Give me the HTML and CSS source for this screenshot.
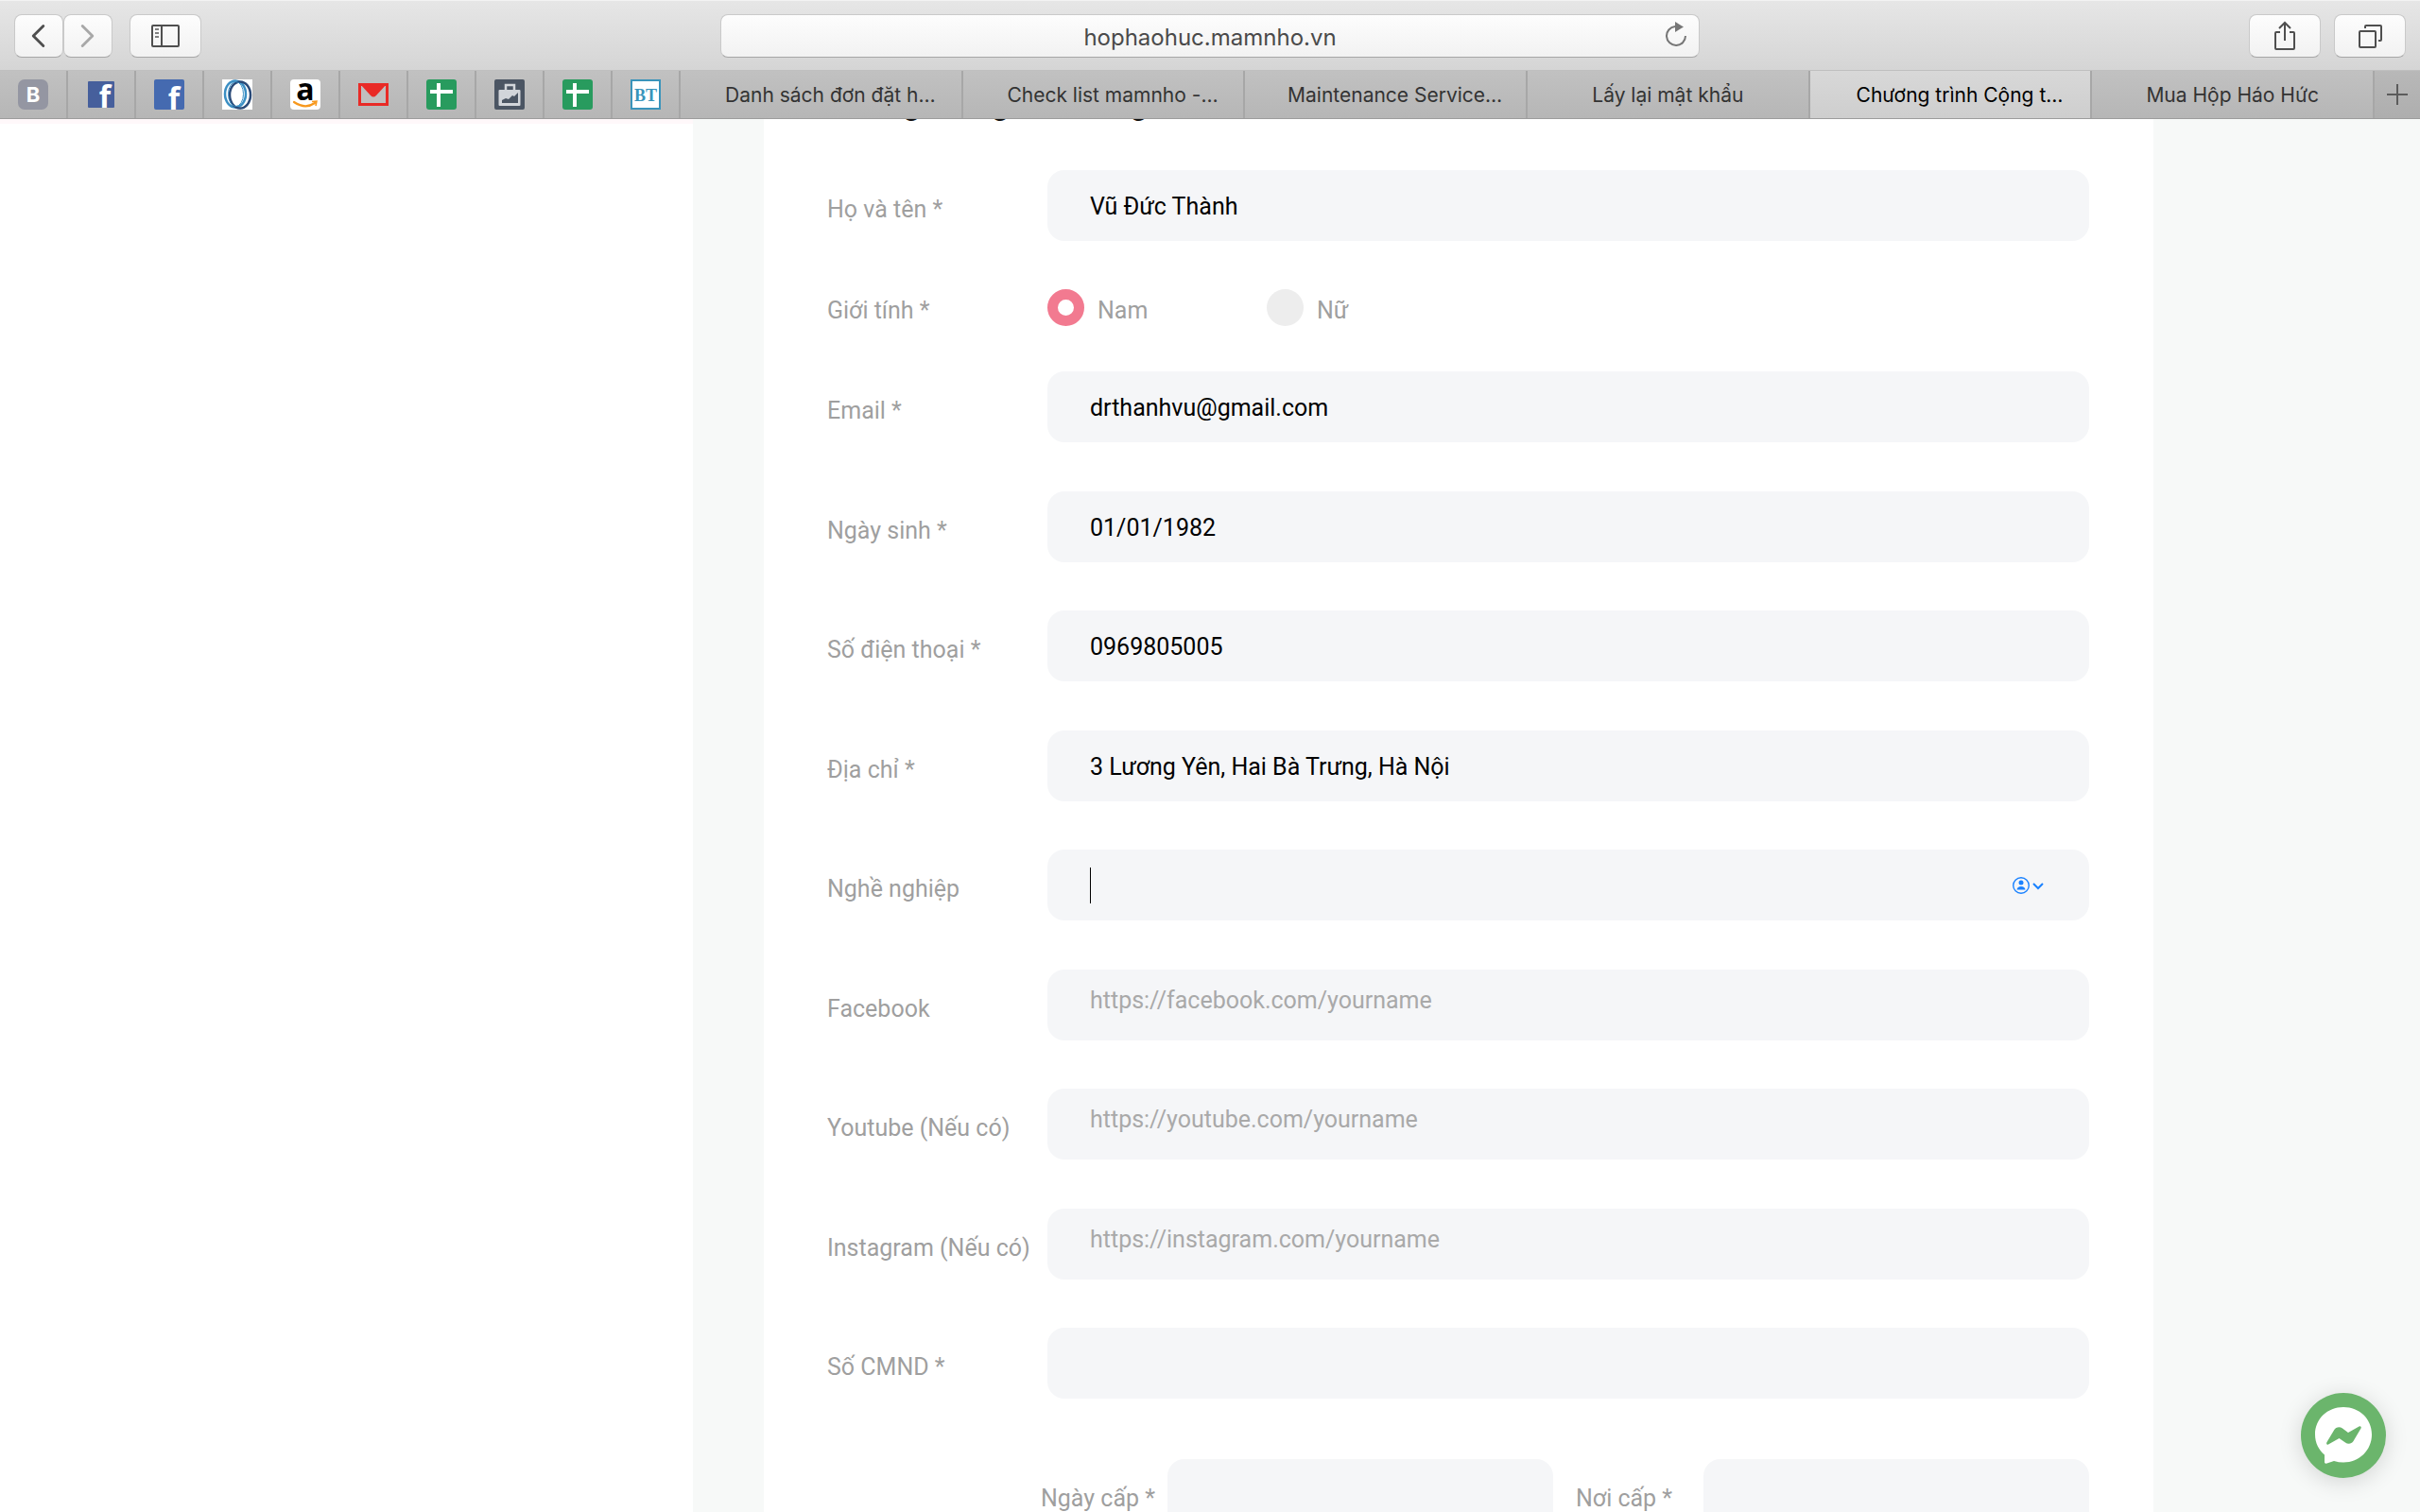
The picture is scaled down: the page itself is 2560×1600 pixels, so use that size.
FILE: index.html
```html
<!DOCTYPE html>
<html lang="vi">
<head>
<meta charset="utf-8">
<title>Chương trình Cộng tác viên</title>
<link rel="stylesheet" href="styles.css">
</head>
<body>
<header class="browser">
  <div class="toolbar">
    <div class="group history">
      <button class="tool narrow" aria-label="Back"><svg width="52" height="46" viewBox="0 0 52 46" fill="none" stroke="#4f4f4f" stroke-width="3" stroke-linecap="round" stroke-linejoin="round"><path d="M31 12 20 23 31 34"/></svg></button>
      <button class="tool narrow" aria-label="Forward"><svg width="52" height="46" viewBox="0 0 52 46" fill="none" stroke="#a8a8a8" stroke-width="3" stroke-linecap="round" stroke-linejoin="round"><path d="M20 12 31 23 20 34"/></svg></button>
    </div>
    <button class="tool" aria-label="Sidebar"><svg width="32" height="26" viewBox="0 0 32 26" fill="none" stroke="#4f4f4f" stroke-width="2"><rect x="2" y="2" width="28" height="22" rx="1"/><path d="M12 2v22"/><path d="M5 6h4M5 10h4M5 14h4" stroke="#808080"/></svg></button>
    <div class="address">
      <input class="url" type="text" value="hophaohuc.mamnho.vn" aria-label="Address">
      <button class="reload" aria-label="Reload"><svg width="26" height="30" viewBox="0 0 26 30"><path d="M23 16a10 10 0 1 1-11-10" fill="none" stroke="#767676" stroke-width="2"/><path d="M12 1 21 6.500 12 12z" fill="#767676"/></svg></button>
    </div>
    <div class="group actions">
      <button class="tool" aria-label="Share"><svg width="28" height="36" viewBox="0 0 28 36" fill="none" stroke="#4f4f4f" stroke-width="2"><path d="M9 14H5a1 1 0 0 0-1 1v16a1 1 0 0 0 1 1h18a1 1 0 0 0 1-1V15a1 1 0 0 0-1-1h-4M14 23V4M8 10l6-6 6 6"/></svg></button>
      <button class="tool" aria-label="Show all tabs"><svg width="28" height="28" viewBox="0 0 28 28" fill="none" stroke="#4f4f4f" stroke-width="2"><rect x="3" y="9" width="17" height="17" rx="1"/><path d="M9 6V4a1 1 0 0 1 1-1h15a1 1 0 0 1 1 1v14a1 1 0 0 1-1 1h-2"/></svg></button>
    </div>
  </div>
  <nav class="tabs">
    <a class="pin" href="#" aria-label="Blog"><svg class="favicon" viewBox="0 0 32 32"><rect width="32" height="32" rx="7" fill="#9496a2"/><text x="16" y="24" text-anchor="middle" class="glyph-b">B</text></svg></a>
    <a class="pin" href="#" aria-label="Facebook"><svg class="favicon" viewBox="0 0 32 32"><rect x="2" y="2" width="28" height="28" rx="1" fill="#465f9c"/><text x="20" y="30" text-anchor="middle" class="glyph-f">f</text></svg></a>
    <a class="pin" href="#" aria-label="Facebook page"><svg class="favicon" viewBox="0 0 32 32"><rect width="32" height="32" rx="2" fill="#456ab0"/><text x="21" y="32" text-anchor="middle" class="glyph-f">f</text></svg></a>
    <a class="pin" href="#" aria-label="Rings"><svg class="favicon" viewBox="0 0 32 32" fill="none"><rect width="32" height="32" fill="#fff"/><ellipse cx="14" cy="15.500" rx="11" ry="14" stroke="#3b8fc4" stroke-width="2.500"/><ellipse cx="19" cy="16.500" rx="11" ry="14" stroke="#2a4a78" stroke-width="2.500"/><ellipse cx="14.500" cy="15.500" rx="8" ry="13" stroke="#3b8fc4"/></svg></a>
    <a class="pin" href="#" aria-label="Amazon"><svg class="favicon" viewBox="0 0 32 32"><rect width="32" height="32" rx="4" fill="#fff"/><text x="16" y="22" text-anchor="middle" class="glyph-a">a</text><path d="M4 24q12 8 22 1" fill="none" stroke="#f7981d" stroke-width="2.200" stroke-linecap="round"/><path d="M23 23.500l5-.5-1 5" fill="none" stroke="#f7981d" stroke-width="1.500"/></svg></a>
    <a class="pin" href="#" aria-label="Gmail"><svg class="favicon" viewBox="0 0 32 32"><path d="M1.500 5.500h29v21h-29z" fill="#c1bfbf" stroke="#e92a26" stroke-width="3"/><path d="M2 5h28L19 17q-3 3-6 0z" fill="#e92a26"/></svg></a>
    <a class="pin" href="#" aria-label="Sheets"><svg class="favicon" viewBox="0 0 32 32"><rect width="32" height="32" rx="3" fill="#289b5e"/><path d="M11 4h4v7h13v4H15v14h-4V15H4v-4h7z" fill="#fff"/></svg></a>
    <a class="pin" href="#" aria-label="Analytics"><svg class="favicon" viewBox="0 0 32 32"><rect width="32" height="32" rx="2" fill="#4b5563"/><path d="M12 12V6h9v6" fill="none" stroke="#d2d5da" stroke-width="2.500"/><rect x="4.500" y="11" width="23" height="17" rx="1" fill="#d2d5da"/><path d="M8 25v-3l4-2 3 1 4-4 2 1 4-4v11z" fill="#4b5563"/></svg></a>
    <a class="pin" href="#" aria-label="Sheets 2"><svg class="favicon" viewBox="0 0 32 32"><rect width="32" height="32" rx="3" fill="#289b5e"/><path d="M11 4h4v7h13v4H15v14h-4V15H4v-4h7z" fill="#fff"/></svg></a>
    <a class="pin" href="#" aria-label="BT"><svg class="favicon" viewBox="0 0 32 32"><rect x="1" y="1" width="30" height="30" fill="#fff" stroke="#3994bb" stroke-width="2"/><text x="16" y="23" text-anchor="middle" class="glyph-bt">BT</text></svg></a>
    <div class="open-tabs">
      <a class="tab cut" href="#">Danh sách đơn đặt h…</a>
      <a class="tab cut" href="#">Check list mamnho -…</a>
      <a class="tab cut" href="#">Maintenance Service…</a>
      <a class="tab" href="#">Lấy lại mật khẩu</a>
      <a class="tab cut current" href="#">Chương trình Cộng t…</a>
      <a class="tab" href="#">Mua Hộp Háo Hức</a>
    </div>
    <button class="new-tab" aria-label="New tab"><svg width="22" height="22" viewBox="0 0 22 22"><path d="M11 0v22M0 11h22" stroke="#5c5c5c" stroke-width="2"/></svg></button>
  </nav>
</header>

<div class="page">
  <aside class="side"></aside>
  <main class="main">
    <form class="card">
      <h2 class="title">Những thông tin chung</h2>
      <div class="row">
        <label class="label" for="name">Họ và tên *</label>
        <input class="field" id="name" type="text" value="Vũ Đức Thành">
      </div>
      <div class="row gender" role="radiogroup" aria-labelledby="gender-label">
        <span class="label" id="gender-label">Giới tính *</span>
        <label class="choice"><input class="radio" type="radio" name="gender" checked><span>Nam</span></label>
        <label class="choice"><input class="radio" type="radio" name="gender"><span>Nữ</span></label>
      </div>
      <div class="row">
        <label class="label" for="email">Email *</label>
        <input class="field" id="email" type="email" value="drthanhvu@gmail.com">
      </div>
      <div class="row">
        <label class="label" for="dob">Ngày sinh *</label>
        <input class="field" id="dob" type="text" value="01/01/1982">
      </div>
      <div class="row">
        <label class="label" for="phone">Số điện thoại *</label>
        <input class="field" id="phone" type="tel" value="0969805005">
      </div>
      <div class="row">
        <label class="label" for="address">Địa chỉ *</label>
        <input class="field" id="address" type="text" value="3 Lương Yên, Hai Bà Trưng, Hà Nội">
      </div>
      <div class="row">
        <label class="label" for="job">Nghề nghiệp</label>
        <div class="control">
          <input class="field" id="job" type="text">
          <span class="caret"></span>
          <button class="autofill" type="button" aria-label="AutoFill contact"><svg width="34" height="20" viewBox="0 0 34 20"><circle cx="10" cy="10" r="8.300" fill="none" stroke="#1a82ff" stroke-width="1.400"/><circle cx="10" cy="7" r="2.500" fill="#1a82ff"/><path d="M5.500 14.500q.5-3.500 4.500-3.500t4.500 3.500z" fill="#1a82ff"/><path d="M23 8l5 5 5-5" fill="none" stroke="#1a82ff" stroke-width="2"/></svg></button>
        </div>
      </div>
      <div class="row">
        <label class="label" for="facebook">Facebook</label>
        <input class="field link" id="facebook" type="text" placeholder="https://facebook.com/yourname">
      </div>
      <div class="row">
        <label class="label" for="youtube">Youtube (Nếu có)</label>
        <input class="field link" id="youtube" type="text" placeholder="https://youtube.com/yourname">
      </div>
      <div class="row">
        <label class="label" for="instagram">Instagram (Nếu có)</label>
        <input class="field link" id="instagram" type="text" placeholder="https://instagram.com/yourname">
      </div>
      <div class="row">
        <label class="label" for="idcard">Số CMND *</label>
        <input class="field" id="idcard" type="text">
      </div>
      <div class="row issue">
        <label class="label" for="issued">Ngày cấp *</label>
        <input class="field" id="issued" type="text">
        <label class="label second" for="place">Nơi cấp *</label>
        <input class="field" id="place" type="text">
      </div>
    </form>
  </main>
</div>

<button class="messenger" aria-label="Messenger"><svg width="90" height="90" viewBox="0 0 90 90"><path d="M45 15C28 15 15 27.500 15 44c0 9 4 16.500 10 21.500V73c0 1.500 1 2 2.500 1.500L35 72q5 1.500 10 1.500c17 0 30-13 30-29.500S62 15 45 15z" fill="#fff"/><path d="M27.500 52 35 39.500c2-3.500 6-4 9-2l6 4.500 11.500-6.500c1.500-1 3 .5 2 2L55.500 51c-2 3-5.500 3.500-8.500 1.500L40.500 48 29 54.500c-1.500 1-2.500-1-1.500-2.500z" fill="#6bb56c"/></svg></button>
</body>
</html>
```
FILE: styles.css
```css
* { box-sizing: border-box; }

body {
  margin: 0;
  height: 100vh;
  display: flex;
  flex-direction: column;
  overflow: hidden;
  background: #fff;
  font-family: Roboto, "Noto Sans", sans-serif;
  font-size: 25px;
}

button, input { font: inherit; margin: 0; }
button { padding: 0; border: 0; background: none; }
svg { display: block; }

/* Browser chrome */
.browser {
  flex: none;
  font-family: Inter, "Liberation Sans", sans-serif;
}

.toolbar {
  display: flex;
  align-items: flex-start;
  height: 75px;
  padding: 14px 15px 0;
  border-top: 1px solid #f3f3f3;
  border-bottom: 1px solid #bfbfbf;
  background: linear-gradient(#e6e6e6, #d5d5d5);
}

.group { display: flex; }
.history { margin-right: 18px; }

.tool {
  display: flex;
  align-items: center;
  justify-content: center;
  width: 76px;
  height: 46px;
  border: 1px solid #c9c9c9;
  border-bottom-color: #a6a6a6;
  border-radius: 8px;
  background: linear-gradient(#fdfdfd, #f2f2f2);
}

.tool.narrow { width: 52px; }

.address {
  position: relative;
  width: 1036px;
  margin-left: auto;
}

.actions { gap: 14px; margin-left: 581px; }

.url {
  display: block;
  width: 100%;
  height: 46px;
  padding: 2px 0 0;
  border: 1px solid #c9c9c9;
  border-bottom-color: #a6a6a6;
  border-radius: 8px;
  background: linear-gradient(#fdfdfd, #f2f2f2);
  color: #4a4a4a;
  font-size: 24px;
  text-align: center;
}

.reload { position: absolute; right: 12px; top: 7px; }

.tabs {
  display: flex;
  height: 51px;
  border-bottom: 1px solid #9c9c9c;
  background: linear-gradient(#c1c1c1, #b6b6b6);
  font-size: 21px;
}

.pin, .tab {
  display: flex;
  align-items: center;
  justify-content: center;
  border-right: 2px solid #a7a7a7;
  color: #333;
  text-decoration: none;
  white-space: nowrap;
}

.pin { flex: none; width: 72px; }

.open-tabs {
  flex: 1;
  display: grid;
  grid-template-columns: repeat(6, minmax(0, 1fr));
}

.tab.cut { padding-left: 20px; }
.tab.current { background: linear-gradient(#d8d8d8, #cecece); color: #000; }

.favicon { width: 32px; height: 32px; overflow: visible; }
.glyph-b { font: 700 22px Inter, sans-serif; fill: #fff; }
.glyph-f { font: 700 32px "Open Sans", sans-serif; fill: #fff; }
.glyph-a { font: 700 32px "Open Sans", sans-serif; fill: #000; }
.glyph-bt { font: 700 18px "Liberation Serif", serif; fill: #3994bb; }

.new-tab {
  display: flex;
  align-items: center;
  justify-content: center;
  width: 48px;
  background: linear-gradient(#b8b8b8, #aeaeae);
}

/* Page */
.page {
  flex: 1;
  min-height: 0;
  display: flex;
  overflow: hidden;
}

.side {
  flex: none;
  width: 733px;
  border-top: 5px solid #fff8fa;
}

.main {
  flex: 1;
  padding: 0 282px 0 75px;
  background: #f7f9f8;
}

.card {
  padding: 0 68px 0 67px;
  background: #fff;
}

.title {
  margin: -34px 0 52px;
  font-size: 33px;
  line-height: 36px;
  font-weight: 700;
  color: #111;
}

.row {
  display: flex;
  align-items: center;
  height: 75px;
  margin-bottom: 51px;
}

.row:nth-child(2n + 4) { margin-bottom: 52px; }
.row.gender { height: 39px; margin-bottom: 48px; }
.row.issue { margin-top: 64px; }

.label {
  flex: none;
  width: 233px;
  padding-top: 8px;
  color: #9f9f9f;
}

.gender .label, .choice span { padding-top: 6px; }

.field {
  flex: 1;
  min-width: 0;
  width: 100%;
  height: 75px;
  padding: 2px 45px 0;
  border: 0;
  border-radius: 18px;
  outline: 0;
  background: #f5f6f8;
  color: #000;
}

.field.link { padding-bottom: 12px; }
.field::placeholder { color: #a9a9a9; opacity: 1; }

.control { position: relative; flex: 1; }

.caret {
  position: absolute;
  left: 45px;
  top: 19px;
  width: 1px;
  height: 38px;
  background: #000;
}

.autofill { position: absolute; right: 48px; top: 28px; }

.choice {
  display: flex;
  align-items: center;
  gap: 14px;
  width: 232px;
  color: #9f9f9f;
}

.radio {
  appearance: none;
  width: 39px;
  height: 39px;
  border-radius: 50%;
  background: #ededed;
}

.radio:checked { border: 11px solid #f27a90; background: #fff; }

.issue { padding-left: 226px; }
.issue .label { width: 134px; }
.issue .label.second { width: 135px; margin-left: 24px; }

.messenger {
  position: fixed;
  right: 36px;
  bottom: 36px;
  width: 90px;
  height: 90px;
  border-radius: 50%;
  background: #6bb56c;
  box-shadow: 0 4px 24px rgba(0, 0, 0, 0.15);
}
```
